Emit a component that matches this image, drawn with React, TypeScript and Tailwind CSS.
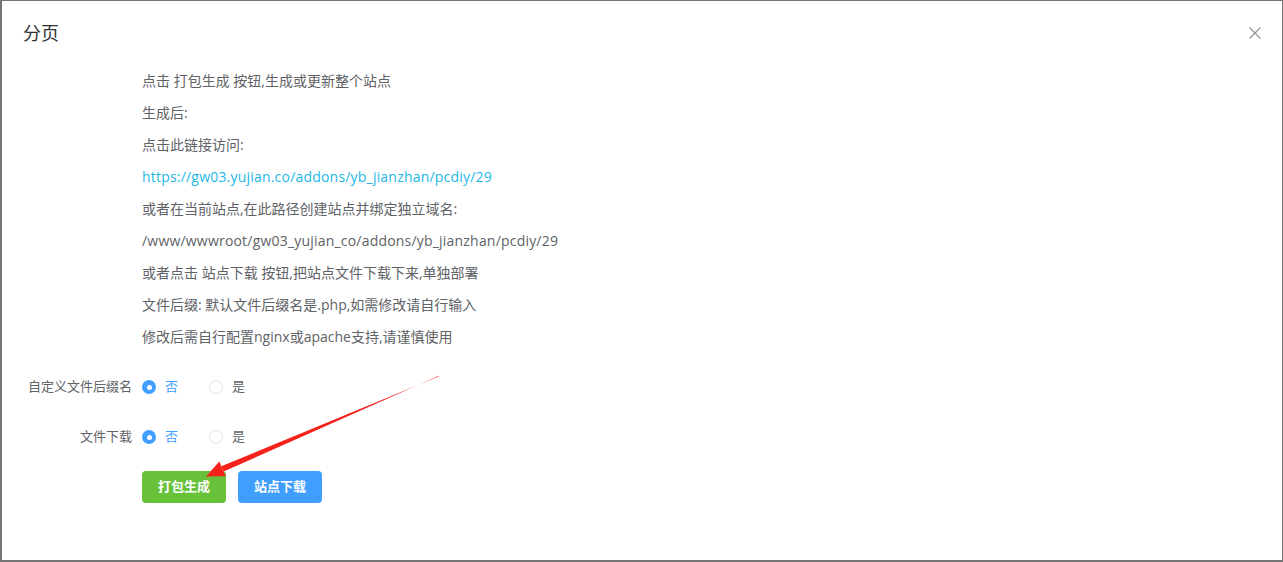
import React from 'react';

const lines: { text: string; link?: boolean; latin?: boolean }[] = [
  { text: '点击 打包生成 按钮,生成或更新整个站点' },
  { text: '生成后:' },
  { text: '点击此链接访问:' },
  { text: 'https://gw03.yujian.co/addons/yb_jianzhan/pcdiy/29', link: true, latin: true },
  { text: '或者在当前站点,在此路径创建站点并绑定独立域名:' },
  { text: '/www/wwwroot/gw03_yujian_co/addons/yb_jianzhan/pcdiy/29', latin: true },
  { text: '或者点击 站点下载 按钮,把站点文件下载下来,单独部署' },
  { text: '文件后缀: 默认文件后缀名是.php,如需修改请自行输入' },
  { text: '修改后需自行配置nginx或apache支持,请谨慎使用' },
];

function Radio({ checked, label }: { checked: boolean; label: string }) {
  return (
    <label className="flex items-center gap-[9px] cursor-pointer">
      {checked ? (
        <span className="w-[14px] h-[14px] rounded-full bg-[#409eff] flex items-center justify-center">
          <span className="w-[5px] h-[5px] rounded-full bg-white" />
        </span>
      ) : (
        <span className="w-[14px] h-[14px] rounded-full border border-[#dcdfe6] bg-white" />
      )}
      <span className={`text-[13px] ${checked ? 'text-[#409eff]' : 'text-[#606266]'}`}>{label}</span>
    </label>
  );
}

function FormRow({ label }: { label: string }) {
  return (
    <div className="flex items-center h-[40px]">
      <div className="w-[130px] text-right text-[13px] text-[#606266]">{label}</div>
      <div className="ml-[10px] flex items-center gap-[31px]">
        <Radio checked label="否" />
        <Radio checked={false} label="是" />
      </div>
    </div>
  );
}

export default function App() {
  return (
    <div
      className="relative w-[1283px] h-[562px] bg-white border-t border-r border-l-2 border-b-2 border-[#757575] overflow-hidden"
      style={{ fontFamily: '"Open Sans", "Noto Sans CJK SC", sans-serif' }}
    >
      {/* Header */}
      <div className="flex items-center justify-between pl-[21px] pr-[20px] pt-[20px]">
        <h2 className="text-[18px] leading-[24px] text-[#303133]">分页</h2>
        <svg width="12" height="12" viewBox="0 0 12 12" className="mr-[1px]">
          <path d="M0.5 0.5L11.5 11.5M11.5 0.5L0.5 11.5" stroke="#909399" strokeWidth="1.2" />
        </svg>
      </div>

      {/* Instructions */}
      <div className="pl-[140px] pt-[20px]">
        {lines.map((l) => (
          <p
            key={l.text}
            className={`text-[14px] leading-[32px] h-[32px] ${l.latin ? 'tracking-[0.2px]' : ''} ${
              l.link ? 'text-[#23b7e5]' : 'text-[#606266]'
            }`}
          >
            {l.text}
          </p>
        ))}
      </div>

      {/* Form */}
      <div className="mt-[14px] flex flex-col gap-[10px]">
        <FormRow label="自定义文件后缀名" />
        <FormRow label="文件下载" />
      </div>

      <div className="mt-[14px] pl-[140px] flex gap-[12px]">
        <button className="w-[84px] h-[32px] rounded-[4px] bg-[#67c23a] text-white text-[13px] font-bold">打包生成</button>
        <button className="w-[84px] h-[32px] rounded-[4px] bg-[#409eff] text-white text-[13px] font-bold">站点下载</button>
      </div>

      {/* Annotation arrow */}
      <svg className="absolute left-[-2px] top-[-1px] pointer-events-none" width="1283" height="562">
        <polygon points="439.4,375.4 438.6,376.6 221.3,466.2 223.7,471.6" fill="#f5221b" />
        <polygon points="206,476.5 219.3,461.5 225.7,476.2" fill="#f5221b" />
      </svg>
    </div>
  );
}
